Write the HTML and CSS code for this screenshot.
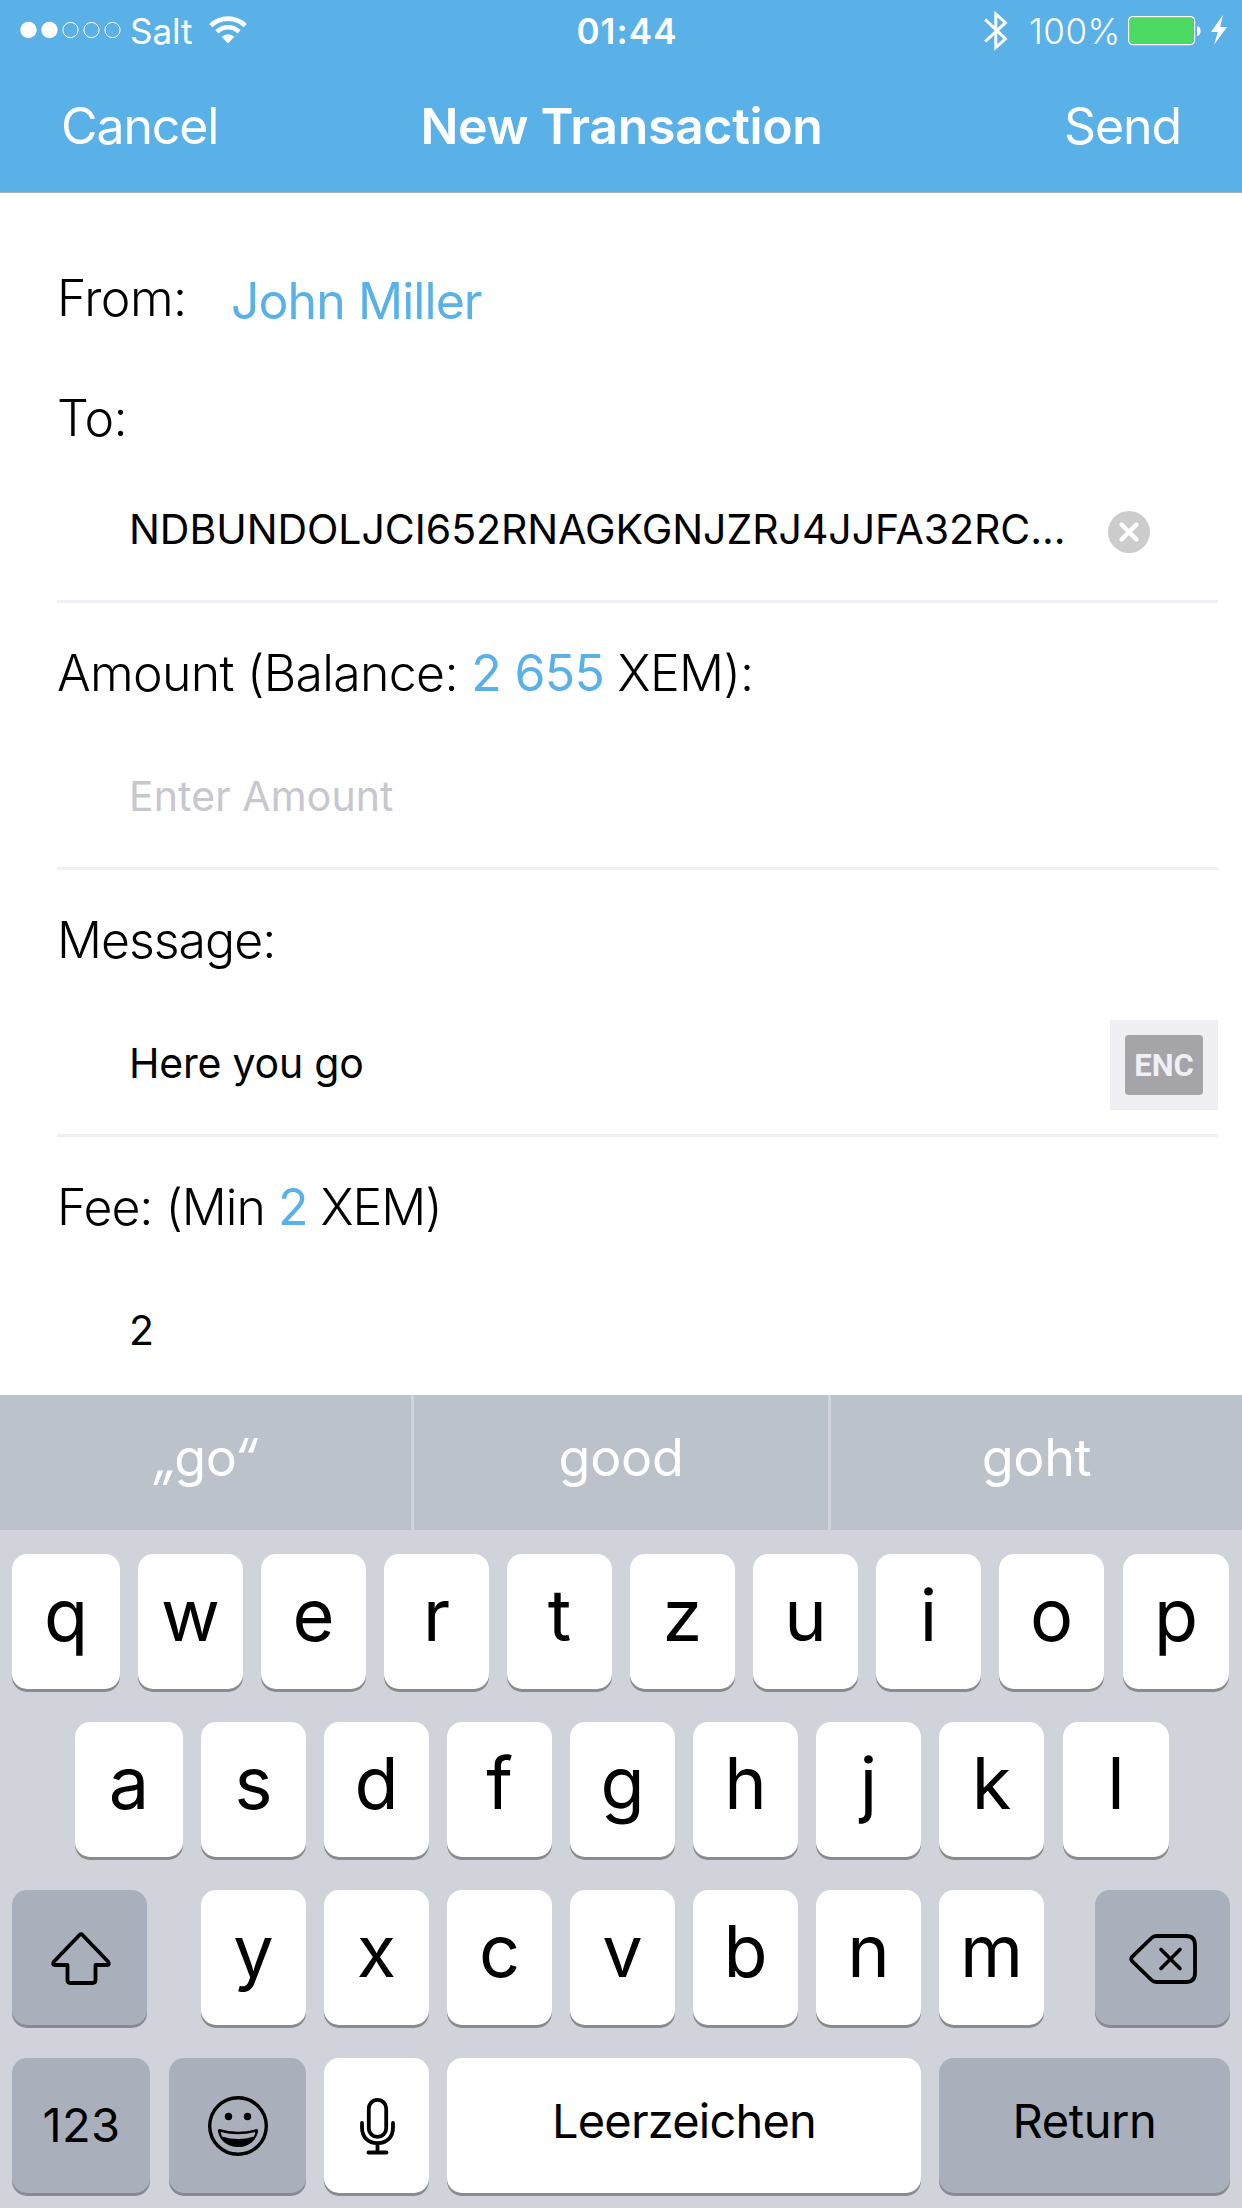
FILE: index.html
```html
<!DOCTYPE html>
<html lang="en">
<head>
<meta charset="utf-8">
<title>New Transaction</title>
<link rel="stylesheet" href="styles.css">
</head>
<body>
<div class="screen">
  <header class="header">
    <div class="status">
      <div class="status-left">
        <svg class="signal" width="101" height="18" viewBox="0 0 101 18">
          <g fill="#fff"><circle cx="8.5" cy="9" r="8.2"/><circle cx="29.5" cy="9" r="8.2"/></g>
          <g fill="none" stroke="#fff" stroke-width="1"><circle cx="50.5" cy="9" r="7.6"/><circle cx="71.5" cy="9" r="7.6"/><circle cx="92.5" cy="9" r="7.6"/></g>
        </svg>
        <span class="carrier">Salt</span>
        <svg class="wifi" width="38" height="28" viewBox="0 0 38 28">
          <g fill="none" stroke="#fff" stroke-width="4.6"><path d="M1.8 9.6A24.6 24.6 0 0 1 36.2 9.6"/><path d="M7.9 15.8A15.8 15.8 0 0 1 30.1 15.8"/></g>
          <path d="M19 27.5L12.6 20.8A9.2 9.2 0 0 1 25.4 20.8Z" fill="#fff"/>
        </svg>
      </div>
      <span class="clock">01:44</span>
      <div class="status-right">
        <svg class="bluetooth" width="24" height="42" viewBox="0 0 24 42">
          <path d="M1.200 9.500L21.500 28.800L11.800 37.500V4L21.500 12.700L1.200 31.500" fill="none" stroke="#fff" stroke-width="3"/>
        </svg>
        <span class="percent">100%</span>
        <svg class="battery" width="73" height="30" viewBox="0 0 73 30">
          <rect x=".6" y=".6" width="66" height="28" rx="4" fill="none" stroke="#fff" stroke-width="1.2"/>
          <rect x="2" y="2" width="63.2" height="25.2" rx="3" fill="#4cd964"/>
          <path d="M69 10C71.8 10.500 72.600 12.500 72.600 15S71.800 19.500 69 20Z" fill="#fff"/>
        </svg>
        <svg class="bolt" width="16" height="30" viewBox="0 0 16 30">
          <path d="M12 0L0 17H6.800L3.200 29.500L16 12H9.200Z" fill="#fff"/>
        </svg>
      </div>
    </div>
    <nav class="nav">
      <span class="cancel">Cancel</span>
      <span class="title">New Transaction</span>
      <span class="send">Send</span>
    </nav>
  </header>

  <main class="form">
    <div class="from"><span class="label from-label">From:</span><span class="account">John Miller</span></div>
    <div class="field field-to">
      <div class="label">To:</div>
      <div class="value"><span class="address">NDBUNDOLJCI652RNAGKGNJZRJ4JJFA32RC...</span>
        <svg class="clear" width="42" height="42" viewBox="0 0 42 42"><circle cx="21" cy="21" r="21" fill="#ccc"/><path d="M13.500 13.500L28.500 28.500M28.500 13.500L13.500 28.500" stroke="#fff" stroke-width="4.400" stroke-linecap="round"/></svg>
      </div>
    </div>
    <div class="field">
      <div class="label amount-label">Amount (Balance: <b>2 655</b> XEM):</div>
      <div class="value"><span class="placeholder">Enter Amount</span></div>
    </div>
    <div class="field">
      <div class="label message-label">Message:</div>
      <div class="value"><span class="message">Here you go</span><span class="enc"><span class="enc-badge">ENC</span></span></div>
    </div>
    <div class="field field-fee">
      <div class="label fee-label">Fee: (Min <b>2</b> XEM)</div>
      <div class="value"><span>2</span></div>
    </div>
  </main>

  <section class="keyboard">
    <div class="suggestions"><span><i class="open">„</i>g<b>o</b><i>“</i></span><span>good</span><span>goht</span></div>
    <div class="keys">
      <div class="row row-1"><span class="key">q</span><span class="key">w</span><span class="key">e</span><span class="key">r</span><span class="key">t</span><span class="key">z</span><span class="key">u</span><span class="key">i</span><span class="key">o</span><span class="key">p</span></div>
      <div class="row row-2"><span class="key">a</span><span class="key">s</span><span class="key">d</span><span class="key">f</span><span class="key">g</span><span class="key">h</span><span class="key">j</span><span class="key">k</span><span class="key">l</span></div>
      <div class="row row-3">
        <span class="key dark"><svg width="60" height="54" viewBox="0 0 60 54"><path d="M28.500 3Q30 1.500 31.500 3L57 29.500Q59 33 56 33H44.500V48Q44.500 51 41.500 51H19.500Q16.500 51 16.500 48V33H4Q1 33 3 29.500Z" fill="none" stroke="#000" stroke-width="3.800" stroke-linejoin="round"/></svg></span>
        <span class="key">y</span><span class="key">x</span><span class="key">c</span><span class="key">v</span><span class="key">b</span><span class="key">n</span><span class="key">m</span>
        <span class="key dark"><svg width="68" height="50" viewBox="0 0 68 50"><path d="M27.500 2H57Q66 2 66 11V39Q66 48 57 48H27.500Q24.500 48 22.500 46L3 27Q1.500 25 3 23L22.500 4Q24.500 2 27.500 2Z" fill="none" stroke="#000" stroke-width="3.800"/><path d="M32 15.500L51 34.500M51 15.500L32 34.500" stroke="#000" stroke-width="3.600" stroke-linecap="round"/></svg></span>
      </div>
      <div class="row row-4">
        <span class="key dark word num">123</span>
        <span class="key dark emoji"><svg width="60" height="60" viewBox="0 0 60 60"><circle cx="30" cy="30" r="28.300" fill="none" stroke="#000" stroke-width="3.400"/><circle cx="20.500" cy="20.500" r="3.700"/><circle cx="39.500" cy="20.500" r="3.700"/><path d="M11.500 33Q30 38.500 48.500 33Q50.500 33 50 35.500C48.500 44 41 51 30 51S11.500 44 10 35.500Q9.500 33 11.500 33Z"/><path d="M12.700 36Q30 40.500 47.300 36Q47 38.500 46 40.500Q30 45.500 14 40.500Q13 38.500 12.700 36Z" fill="#a9b0bc"/></svg></span>
        <span class="key"><svg width="35" height="57" viewBox="0 0 35 57"><g fill="none" stroke="#000" stroke-width="3.800" stroke-linecap="round"><rect x="8.800" y="1.900" width="17.400" height="37" rx="8.700"/><path d="M2 25V29.500C2 39 8 45.200 17.500 45.200S33 39 33 29.500V25M17.500 46V54M8.500 54.500H26.500"/></g></svg></span>
        <span class="key word space">Leerzeichen</span>
        <span class="key dark word return">Return</span>
      </div>
    </div>
  </section>
</div>
</body>
</html>
```
FILE: styles.css
```css
* { box-sizing: border-box; }
body { margin: 0; background: #fff; color: #000; font-family: Inter, "Liberation Sans", sans-serif; }
svg { display: block; flex: none; }
.screen { width: 1242px; height: 2208px; display: flex; flex-direction: column; overflow: hidden; white-space: nowrap; }

.header { height: 193px; flex: none; background: #5ab1e8; border-bottom: 1px solid #a9b0b6; color: #fff; }
.status { height: 60px; display: grid; grid-template-columns: 1fr auto 1fr; font-size: 35px; line-height: 62px; }
.status-left, .status-right { display: flex; align-items: flex-start; }
.status-left { padding-left: 20px; }
.status-right { justify-content: flex-end; padding-right: 15px; }
.signal { margin-top: 21px; }
.carrier { margin-left: 9px; width: 80px; }
.wifi { margin-top: 16px; margin-left: -1px; }
.clock { font-weight: 600; letter-spacing: 1.1px; padding-left: 12px; }
.bluetooth { margin-top: 10px; }
.percent { width: 98px; margin-left: 21px; margin-right: 1px; font-weight: 350; letter-spacing: .5px; }
.battery { margin-top: 16px; }
.bolt { margin: 15px 0 0 10px; }
.nav { height: 132px; padding: 0 61px; display: grid; grid-template-columns: 1fr auto 1fr; font-size: 50px; line-height: 132px; }
.cancel, .send { font-weight: 370; letter-spacing: -1.1px; }
.title { font-weight: 600; letter-spacing: -.35px; padding-left: 1px; }
.send { text-align: right; }

.form { height: 1202px; flex: none; padding: 75px 24px 0 57px; overflow: hidden; }
.from { height: 101px; display: flex; font-size: 50px; line-height: 60px; }
.label { font-size: 50px; font-weight: 300; line-height: 60px; letter-spacing: -.5px; }
.from-label { width: 174px; }
.amount-label { letter-spacing: -.68px; }
.message-label { letter-spacing: -1px; }
.fee-label { letter-spacing: -1.02px; }
.label b, .account { font-weight: 400; color: #5ab1e8; }
.account { padding-top: 3px; letter-spacing: -.95px; }
.field { height: 267px; padding-top: 40px; border-bottom: 3px solid #efeff4; }
.field-to { height: 234px; padding-top: 19px; }
.field-fee { border: 0; }
.value { height: 90px; display: flex; align-items: center; padding-left: 72px; font-size: 41px; line-height: 56px; }
.value > span:first-child { padding-bottom: 4px; }
.field .label { margin-bottom: 50px; }
.field-to .label { margin-bottom: 39px; }
.value > .address:first-child { width: 979px; padding-bottom: 6px; letter-spacing: -.04px; }
.message { letter-spacing: -.2px; }
.placeholder { color: #c7c7cd; letter-spacing: .1px; }
.enc { width: 108px; height: 90px; margin-left: auto; padding: 15px; background: #efeff4; }
.enc-badge { display: block; height: 60px; border-radius: 4px; background: #a5a4a9; color: #efeff4; font: 700 31px/61px Roboto, sans-serif; text-align: center; }

.keyboard { flex: 1; display: flex; flex-direction: column; background: #d0d3da; }
.suggestions { height: 135px; display: grid; grid-template-columns: 411px 414px 411px; gap: 3px; color: #fff; font-size: 52px; line-height: 125px; letter-spacing: -.3px; text-align: center; }
.suggestions span { background: #bbc2ca; }
.suggestions b { font-weight: 400; letter-spacing: -4px; }
.suggestions .open { letter-spacing: -4px; }
.keys { padding: 24px 12px 0; display: flex; flex-direction: column; gap: 33px; }
.row { height: 135px; display: grid; gap: 18px; }
.row-1 { grid-template-columns: 108px repeat(8, 105px) 107px; }
.row-2 { grid-template-columns: 108px repeat(7, 105px) 107px; padding-left: 63px; }
.row-1 .key:last-child, .row-2 .key:last-child { margin-left: 1px; }
.row-3 { grid-template-columns: 171px repeat(7, 105px) 168px; }
.row-3 .key:first-child { margin-right: 36px; }
.row-3 .key:last-child { margin-left: 33px; }
.row-4 { grid-template-columns: 138px 138px 105px 474px 291px; }
.key { display: flex; align-items: center; justify-content: center; border-radius: 15px; background: #fff; box-shadow: 0 3px 0 #888b8e; font-size: 72px; font-weight: 380; line-height: 121px; padding-bottom: 14px; }
.dark { background: #a9b0bc; }
.key:has(svg) { padding: 2px 0 0 1px; }
.row .emoji { margin-left: 1px; padding: 1px 0 0; }
.row-3 .dark:first-child { padding-left: 3px; }
.word { font-size: 47px; font-weight: 400; padding-bottom: 11px; }
.num { padding: 0 0 3px 1px; letter-spacing: .4px; }
.space { letter-spacing: -.8px; }
.return { letter-spacing: -.4px; }
```
